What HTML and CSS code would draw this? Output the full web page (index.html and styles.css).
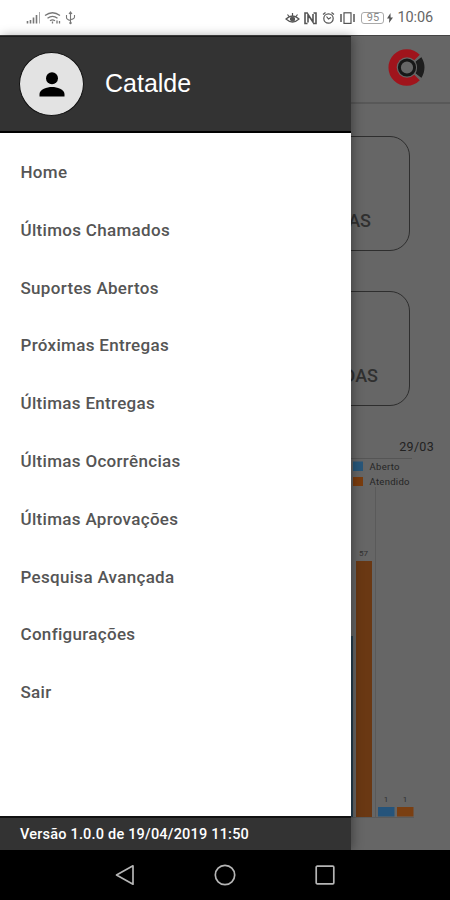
FILE: index.html
```html
<!DOCTYPE html>
<html lang="pt-BR">
<head>
<meta charset="utf-8">
<title>Catalde</title>
<link rel="stylesheet" href="styles.css">
</head>
<body>
<div class="phone">
  <header class="status">
    <svg class="status-left" width="50" height="14" viewBox="0 0 50 14" fill="none" stroke="#777">
      <path d="M1.500 10v2.500M4.500 9v3.500M7.500 6.500v6M10.500 4v8.500" stroke-width="1.600"/>
      <path d="M13.500 1v11.500" stroke="#aaa"/>
      <path d="M19 4.500q7.500-5.500 15 0M21.500 7.300q5-3.700 10 0M24 9.700q2.500-1.800 5 0" stroke-width="1.300"/>
      <path d="M26.500 10.500v2M31 9.500v3M33.500 10v2.500" stroke-width="1.300"/>
      <path d="M44.500 1.500v10.500M40.500 4v2.500q0 2 4 3M48.500 4v2q0 2-4 2.500M43 3l1.500-2 1.500 2" stroke-width="1.100"/>
      <circle cx="44.500" cy="12" r="1.200" fill="#777" stroke="none"/>
    </svg>
    <div class="status-right">
      <svg width="72" height="14" viewBox="0 0 72 14" fill="none" stroke="#555" stroke-width="1.200">
        <path d="M1 8q6.500-6 13 0q-6.500 6-13 0zM2.500 3.500l1.500 2M7.500 2v2.500M12.500 3.500L11 5.500"/>
        <circle cx="7.500" cy="8" r="2" fill="#555"/>
        <path d="M22.500 2H20v10.500h2.500M28.500 2H31v10.500h-2.500M23 11.500v-8l5 7.500V3" stroke-width="1.600"/>
        <circle cx="43.500" cy="7.500" r="4.700"/>
        <path d="M41.500 5.500l2 2.500 2.500-1.500M38 3.500L40.500 1.500M49 3.500L46.500 1.500"/>
        <rect x="59" y="1.800" width="7" height="10.600"/>
        <path d="M56 3v8M69 3v8" stroke-width="1.500"/>
      </svg>
      <span class="battery">95</span>
      <svg class="bolt" width="6" height="10" viewBox="0 0 6 10"><path d="M3.500 0L0 5.500h2.300L2 10l4-5.500H3.600z" fill="#555"/></svg>
      <span class="clock">10:06</span>
    </div>
  </header>

  <div class="stage">
    <main class="page">
      <div class="appbar">
        <svg class="logo" width="38" height="38" viewBox="0 0 38 38" fill="none">
          <path d="M28.400 9.100A13.500 13.500 0 1 0 28.400 27.900" stroke="#a0141c" stroke-width="9.500"/>
          <circle cx="19" cy="18.500" r="10.300" fill="#666"/>
          <circle cx="19" cy="18.500" r="7.600" stroke="#171717" stroke-width="3"/>
          <path d="M33.200 8A18.500 18.500 0 0 1 33.200 29L27.500 24.500A13 13 0 0 0 27.500 12.500z" fill="#1d1d1d"/>
          <path d="M34 6.500L26.500 12.500M34 30.500L26.500 24.500" stroke="#666" stroke-width="1.500"/>
        </svg>
      </div>
      <div class="cards">
        <section class="card">AS</section>
        <section class="card card-wide">DAS</section>
      </div>
      <section class="report">
        <div class="date">29/03</div>
        <svg class="chart" width="110" height="364" viewBox="0 0 110 364">
          <path d="M0 3.500H72" stroke="#555"/>
          <path d="M35.500 32V362" stroke="#5a5a5a"/>
          <path d="M0 362.500H74" stroke="#5a5a5a"/>
          <rect x="13" y="6.500" width="10" height="9.500" fill="#28577a"/>
          <rect x="13" y="22" width="10" height="9" fill="#7a3c0e"/>
          <text x="29.500" y="14.500" class="legend" textLength="30">Aberto</text>
          <text x="29.500" y="30" class="legend" textLength="40">Atendido</text>
          <rect x="0" y="181" width="13" height="181" fill="#263f4f"/>
          <rect x="16" y="106" width="16" height="256" fill="#6a3813"/>
          <text x="23.500" y="101" class="value">57</text>
          <rect x="38" y="352" width="16.500" height="9.500" fill="#25547b"/>
          <rect x="57" y="352" width="16.500" height="9.500" fill="#7a3f12"/>
          <text x="46" y="347" class="value">1</text>
          <text x="65" y="347" class="value">1</text>
        </svg>
      </section>
    </main>

    <aside class="drawer">
      <div class="profile">
        <div class="avatar">
          <svg width="26" height="25" viewBox="0 0 26 25"><circle cx="13" cy="6.200" r="6" fill="#000"/><path d="M.5 24.500v-2.500C.5 17.500 8 15 13 15s12.500 2.500 12.500 7v2.500z" fill="#000"/></svg>
        </div>
        <h1 class="name">Catalde</h1>
      </div>
      <nav class="menu">
        <a>Home</a>
        <a>Últimos Chamados</a>
        <a>Suportes Abertos</a>
        <a>Próximas Entregas</a>
        <a>Últimas Entregas</a>
        <a>Últimas Ocorrências</a>
        <a>Últimas Aprovações</a>
        <a>Pesquisa Avançada</a>
        <a>Configurações</a>
        <a>Sair</a>
      </nav>
      <footer class="version">Versão 1.0.0 de 19/04/2019 11:50</footer>
    </aside>
  </div>

  <div class="navbar">
    <svg width="20" height="22" viewBox="0 0 20 22"><path d="M1.500 11L18 1.800v18.400z" class="key"/></svg>
    <svg width="22" height="22" viewBox="0 0 22 22"><circle cx="11" cy="11" r="9.700" class="key"/></svg>
    <svg width="20" height="20" viewBox="0 0 20 20"><rect x="1.200" y="1.200" width="17.600" height="17.600" rx="1" class="key"/></svg>
  </div>
</div>
</body>
</html>
```
FILE: styles.css
```css
* { box-sizing: border-box; }
body { margin: 0; font-family: Roboto, sans-serif; }
.phone { width: 450px; height: 900px; display: flex; flex-direction: column; overflow: hidden; }

.status { height: 35px; flex: none; display: flex; justify-content: space-between; align-items: center; padding: 0 17px 0 26px; background: #fff; }
.status-right { display: flex; align-items: center; color: #666; }
.battery { width: 23px; height: 12px; margin-left: 4px; border: 1px solid #aaa; border-radius: 3px; font-size: 11px; line-height: 10px; text-align: center; color: #888; }
.bolt { margin: 0 4px 0 3px; }
.clock { font-size: 14.500px; line-height: 20px; letter-spacing: -.1px; }

.stage { position: relative; height: 815px; flex: none; border-top: 1px solid #444; }
.page { height: 100%; background: #666; display: flex; flex-direction: column; align-items: flex-end; }
.appbar { width: 100%; height: 68px; flex: none; display: flex; justify-content: flex-end; align-items: center; padding: 0 24px 2px 0; border-bottom: 2px solid #585858; }
.cards { display: flex; flex-direction: column; gap: 40px; padding: 32px 40px 0 0; }
.card { width: 370px; height: 115px; display: flex; justify-content: flex-end; align-items: flex-end; padding: 0 38px 19px 0; border: 1.500px solid #2e2e2e; border-radius: 20px; color: #303030; font-size: 18px; font-weight: 500; line-height: 20px; }
.card-wide { padding-right: 31px; }
.report { display: flex; flex-direction: column; align-items: flex-end; padding-top: 33px; }
.date { padding-right: 16px; color: #222; font-size: 12.500px; line-height: 16px; letter-spacing: .3px; }
.chart { display: block; }
.legend { font-size: 9.500px; fill: #252525; }
.value { font-size: 8px; fill: #303030; text-anchor: middle; }

.drawer { position: absolute; top: 0; left: 0; width: 350.500px; height: 814px; display: flex; flex-direction: column; background: #fff; box-shadow: 2px 0 10px rgba(0, 0, 0, .35); }
.profile { height: 97px; flex: none; display: flex; align-items: center; gap: 21px; padding-left: 19px; background: #333; border-top: 1px solid #1c1c1c; border-bottom: 2px solid #000; }
.avatar { width: 65px; height: 64px; display: flex; justify-content: center; align-items: center; background: #e3e3e3; border: 1px solid #111; border-radius: 50%; }
.name { margin: 0 0 2px; color: #fff; font: 400 25px/30px "Liberation Sans", sans-serif; }
.menu { flex: 1; display: flex; flex-direction: column; padding-top: 10.300px; }
.menu a { height: 57.780px; flex: none; display: flex; align-items: center; padding-left: 20.500px; color: #555; font-size: 17px; font-weight: 500; letter-spacing: .31px; }
.version { height: 34px; flex: none; display: flex; align-items: center; padding: 0 0 0 20px; border-top: 2px solid #111; background: #333; color: #fff; font-size: 14.500px; font-weight: 500; letter-spacing: .2px; }

.navbar { flex: 1; display: flex; justify-content: center; align-items: center; gap: 79px; background: #000; }
.key { fill: none; stroke: #b5b5b5; stroke-width: 1.700; stroke-linejoin: round; }
```
